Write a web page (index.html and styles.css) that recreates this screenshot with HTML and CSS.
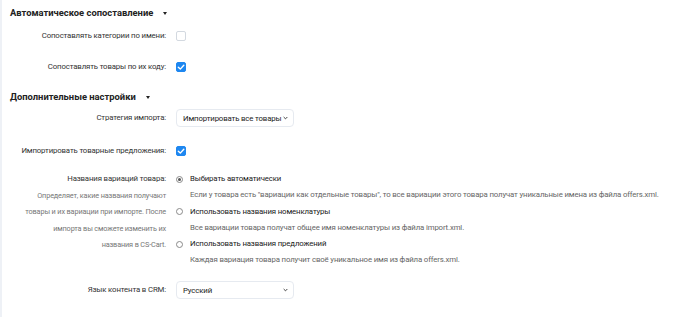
FILE: index.html
```html
<!DOCTYPE html>
<html lang="ru">
<head>
<meta charset="utf-8">
<link rel="stylesheet" href="styles.css">
</head>
<body>
<div class="page">
  <h3 class="sec-title">Автоматическое сопоставление <span class="caret"></span></h3>
  <div class="row r1">
    <label class="lbl">Сопоставлять категории по имени:</label>
    <div class="ctl"><span class="cb"></span></div>
  </div>
  <div class="row r2">
    <label class="lbl">Сопоставлять товары по их коду:</label>
    <div class="ctl"><span class="cb on"><svg viewBox="0 0 10 10" width="10" height="10"><path d="M2.3 5.2 L4.3 7.1 L7.8 3.2" fill="none" stroke="#fff" stroke-width="1.4" stroke-linecap="round" stroke-linejoin="round"/></svg></span></div>
  </div>

  <h3 class="sec-title t2">Дополнительные настройки <span class="caret"></span></h3>
  <div class="row r3">
    <label class="lbl">Стратегия импорта:</label>
    <div class="ctl"><div class="sel">Импортировать все товары<svg class="chev" viewBox="0 0 6 4" width="5" height="4"><path d="M0.8 0.8 L3 3 L5.2 0.8" fill="none" stroke="#333" stroke-width="1.1"/></svg></div></div>
  </div>
  <div class="row r4">
    <label class="lbl">Импортировать товарные предложения:</label>
    <div class="ctl"><span class="cb on"><svg viewBox="0 0 10 10" width="10" height="10"><path d="M2.3 5.2 L4.3 7.1 L7.8 3.2" fill="none" stroke="#fff" stroke-width="1.4" stroke-linecap="round" stroke-linejoin="round"/></svg></span></div>
  </div>
  <div class="row r5">
    <div class="lbl">
      <div>Названия вариаций товара:</div>
      <div class="lbl-desc">Определяет, какие названия получают<br>товары и их вариации при импорте. После<br>импорта вы сможете изменить их<br>названия в CS-Cart.</div>
    </div>
    <div class="ctl radios">
      <div class="radio-item">
        <span class="rb on"></span>
        <div>
          <div class="r-title">Выбирать автоматически</div>
          <div class="r-desc">Если у товара есть "вариации как отдельные товары", то все вариации этого товара получат уникальные имена из файла offers.xml.</div>
        </div>
      </div>
      <div class="radio-item">
        <span class="rb"></span>
        <div>
          <div class="r-title">Использовать названия номенклатуры</div>
          <div class="r-desc">Все вариации товара получат общее имя номенклатуры из файла import.xml.</div>
        </div>
      </div>
      <div class="radio-item">
        <span class="rb"></span>
        <div>
          <div class="r-title">Использовать названия предложений</div>
          <div class="r-desc">Каждая вариация товара получит своё уникальное имя из файла offers.xml.</div>
        </div>
      </div>
    </div>
  </div>
  <div class="row r6">
    <label class="lbl">Язык контента в CRM:</label>
    <div class="ctl"><div class="sel">Русский<svg class="chev" viewBox="0 0 6 4" width="5" height="4"><path d="M0.8 0.8 L3 3 L5.2 0.8" fill="none" stroke="#333" stroke-width="1.1"/></svg></div></div>
  </div>
</div>
</body>
</html>
```
FILE: styles.css
```css
html, body { margin: 0; padding: 0; background: #fff; }
body { font-family: Roboto, "Noto Sans", sans-serif; color: #333; font-size: 7.8px; letter-spacing: -0.14px; }
.page {
  border-left: 2px solid #eef1f6;
  min-height: 317px;
  box-sizing: border-box;
  padding: 5px 0 0 8px;
}
.sec-title {
  margin: 0;
  font-size: 9.4px;
  letter-spacing: 0;
  font-weight: 700;
  color: #222;
  line-height: 16px;
  height: 16px;
  display: flex;
  align-items: center;
}
.sec-title.t2 { margin-top: 14px; }
.caret {
  display: inline-block;
  margin-left: 10px;
  width: 0; height: 0;
  border-left: 2.5px solid transparent;
  border-right: 2.5px solid transparent;
  border-top: 3px solid #222;
}
.row {
  display: grid;
  grid-template-columns: 156px 1fr;
  column-gap: 10px;
  align-items: center;
}
.lbl {
  text-align: right;
  color: #333;
  line-height: 16px;
}
.ctl { display: flex; align-items: center; }
.r1 { margin-top: 7px; }
.r2 { margin-top: 15px; }
.r3 { margin-top: 4px; }
.r4 { margin-top: 16px; }
.r5 { margin-top: 12px; align-items: start; }
.r6 { margin-top: 13px; }
.cb {
  display: block;
  width: 8px; height: 8px;
  border: 1px solid #d3d9e0;
  border-radius: 2px;
  background: #fff;
  position: relative;
}
.cb.on {
  border-color: #1e87f0;
  background: #1e87f0;
}
.cb.on svg { position: absolute; left: -1px; top: -1px; }
.sel {
  width: 118px; height: 18px;
  box-sizing: border-box;
  border: 1px solid #e6eaf0;
  border-radius: 4px;
  padding: 0 5px 0 6px;
  display: flex;
  align-items: center;
  justify-content: space-between;
  color: #222;
}
.chev { flex: none; }
.r5 .lbl { line-height: 16.5px; }
.lbl-desc { color: #777; font-size: 7.3px; }
.radios { display: flex; flex-direction: column; align-items: stretch; }
.radio-item { display: flex; gap: 7px; line-height: 16px; }
.radio-item + .radio-item { margin-top: 0.5px; }
.rb {
  flex: none;
  margin-top: 4.5px;
  width: 5px; height: 5px;
  border: 1px solid #8a8a8a;
  border-radius: 50%;
  background: #fff;
  position: relative;
}
.rb.on::after {
  content: "";
  position: absolute;
  left: 1px; top: 1px;
  width: 3px; height: 3px;
  border-radius: 50%;
  background: #555;
}
.r-title { color: #1a1a1a; }
.r-desc { color: #666; }
```
